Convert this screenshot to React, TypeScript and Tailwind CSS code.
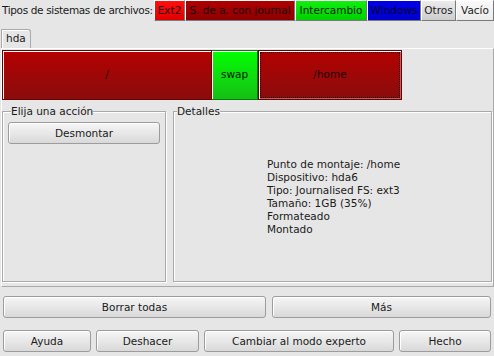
import React from "react";

const legend = [
  { label: "Ext2", w: "w-[31px]", cls: "bg-gradient-to-b from-[#ff1010] to-[#e00000] text-[#300000]" },
  { label: "S. de a. con journal", w: "w-[110px]", cls: "bg-gradient-to-b from-[#b00000] to-[#8e0000] text-[#1a0000]" },
  { label: "Intercambio", w: "w-[72px]", cls: "bg-gradient-to-b from-[#10f010] to-[#00d000] text-[#002000]" },
  { label: "Windows", w: "w-[54px]", cls: "bg-gradient-to-b from-[#0000e8] to-[#0000cc] text-[#000030]" },
  { label: "Otros", w: "w-[35px]", cls: "bg-gradient-to-b from-[#ececec] to-[#cdcdcd] text-[#222]" },
  { label: "Vacío", w: "w-[38px]", cls: "bg-gradient-to-b from-[#fafafa] to-[#ebebeb] text-[#222]" },
];

const details = [
  "Punto de montaje: /home",
  "Dispositivo: hda6",
  "Tipo: Journalised FS: ext3",
  "Tamaño: 1GB (35%)",
  "Formateado",
  "Montado",
];

function Btn({ children, className = "" }: { children: React.ReactNode; className?: string }) {
  return (
    <button
      className={
        "h-[22px] rounded-[3px] border border-[#9c9c9c] bg-gradient-to-b from-[#f6f6f6] to-[#d9d9d9] shadow-[inset_1px_1px_0_#ffffff] text-[#1a1a1a] leading-none whitespace-nowrap " +
        className
      }
    >
      {children}
    </button>
  );
}

function Group({ title, className = "", children }: { title: string; className?: string; children?: React.ReactNode }) {
  return (
    <fieldset
      className={
        "border border-[#a9a9a9] shadow-[inset_1px_1px_0_#ffffff,1px_1px_0_#ffffff] min-w-0 " + className
      }
    >
      <legend className="ml-[3px] px-0 bg-[#e6e6e6] leading-[12px] text-[#1a1a1a]">{title}</legend>
      {children}
    </fieldset>
  );
}

export default function App() {
  return (
    <div
      className="w-[494px] h-[356px] overflow-hidden bg-[#e6e6e6] text-[10.5px] text-[#1a1a1a]"
      style={{ fontFamily: '"DejaVu Sans", sans-serif' }}
    >
      {/* legend of filesystem types */}
      <div className="flex h-[21px]">
        <div className="w-[154px] pl-[2px] flex items-center whitespace-nowrap tracking-[-0.35px]">
          Tipos de sistemas de archivos:
        </div>
        {legend.map((l) => (
          <div
            key={l.label}
            className={
              "flex items-center justify-center whitespace-nowrap border border-t-white border-l-white border-r-[#7a7a7a] border-b-[#7a7a7a] " +
              l.w +
              " " +
              l.cls
            }
          >
            {l.label}
          </div>
        ))}
      </div>

      {/* tab */}
      <div className="mt-[8px] pl-[1px] flex">
        <div className="h-[19px] w-[30px] border border-b-0 border-[#a9a9a9] rounded-tr-[3px] shadow-[inset_1px_1px_0_#ffffff] flex items-center pl-[4px]">
          hda
        </div>
      </div>

      {/* tab panel */}
      <div className="ml-[1px] w-[493px] h-[239px] border-t border-l border-t-white border-l-white border-r border-b border-r-[#a9a9a9] border-b-[#a9a9a9] pt-[1px] flex flex-col">
        <div className="flex h-[50px] w-[400px]">
          <div className="w-[210px] border border-[#6a0000] shadow-[inset_1px_1px_0_#ffffff] bg-gradient-to-b from-[#b40000] to-[#8a0c0c] flex items-center justify-center text-[#1a0000]">
            /
          </div>
          <div className="w-[46px] border-y border-r border-[#0a7a0a] shadow-[inset_1px_1px_0_#ffffff] bg-gradient-to-b from-[#00ff00] to-[#14c014] flex items-center justify-center text-[#002000]">
            swap
          </div>
          <div className="flex-1 border border-[#6a0000] p-[1px] bg-gradient-to-b from-[#b40000] to-[#8a0c0c] shadow-[inset_1px_1px_0_#ffffff,inset_-1px_-1px_0_#c06060]">
            <div className="h-full border border-dotted border-black flex items-center justify-center text-[#1a0000]">
              /home
            </div>
          </div>
        </div>

        <div className="flex gap-[7px] mt-[5px] pr-[1px]">
          <Group title="Elija una acción" className="w-[164px] h-[177px] px-[5px] pt-[5px]">
            <Btn className="w-[152px] h-[21px]">Desmontar</Btn>
          </Group>
          <Group title="Detalles" className="flex-1 h-[177px]">
            <div className="h-[159px] flex items-center justify-center">
              <div className="leading-[13px] pl-[2px]">
                {details.map((d) => (
                  <div key={d}>{d}</div>
                ))}
              </div>
            </div>
          </Group>
        </div>
      </div>

      {/* buttons */}
      <div className="flex gap-[6px] px-[3px] mt-[9px]">
        <Btn className="flex-1">Borrar todas</Btn>
        <Btn className="w-[219px]">Más</Btn>
      </div>
      <div className="flex gap-[5px] px-[3px] mt-[12px]">
        <Btn className="w-[88px]">Ayuda</Btn>
        <Btn className="w-[103px]">Deshacer</Btn>
        <Btn className="w-[190px]">Cambiar al modo experto</Btn>
        <Btn className="w-[92px]">Hecho</Btn>
      </div>
    </div>
  );
}
